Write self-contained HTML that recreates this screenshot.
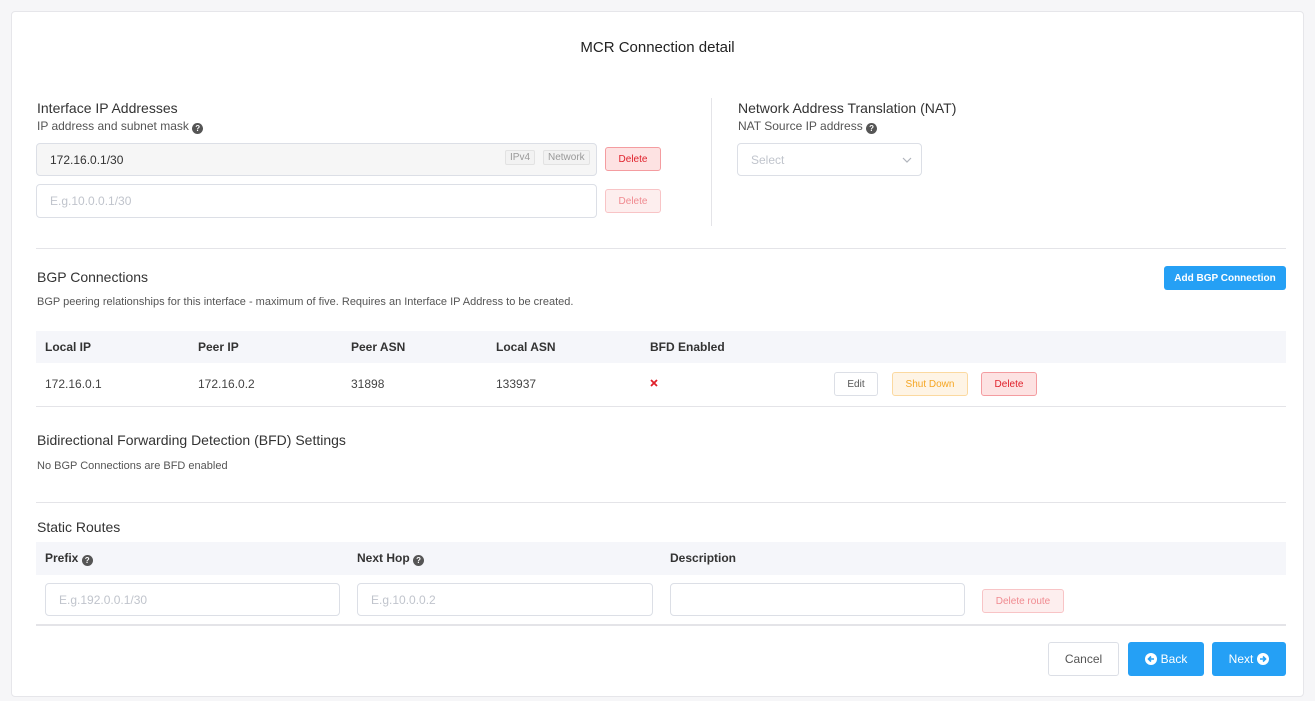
<!DOCTYPE html>
<html><head><style>
*{box-sizing:border-box;margin:0;padding:0}
body{width:1315px;height:701px;background:#f6f6f8;font-family:"Liberation Sans",sans-serif;color:#333;position:relative;overflow:hidden}
.card{position:absolute;left:11px;top:11px;width:1293px;height:686px;background:#fff;border:1px solid #e6e6ea;border-radius:4px}
.a{position:absolute}
.h{font-size:14px;color:#333}
.s{font-size:12px;color:#555}
.inp{position:absolute;border:1px solid #dcdfe6;border-radius:4px;background:#fff;font-size:12px;color:#c0c4cc;padding-left:13px;display:flex;align-items:center}
.btn{position:absolute;border-radius:3px;font-size:10px;display:flex;align-items:center;justify-content:center}
.del{background:#fde2e2;border:1px solid #f49ca0;color:#e0212b}
.deld{background:#fdeeee;border:1px solid #f8c4c6;color:#f08a90}
.tag{position:absolute;font-size:10px;color:#999;border:1px solid #e2e2e2;background:#f2f2f2;border-radius:2px;padding:1px 4px}
.line{position:absolute;left:36px;width:1250px;height:1px;background:#e4e4e8}
.th{position:absolute;left:36px;width:1250px;background:#f5f6fa}
.tt{position:absolute;font-size:12px;font-weight:bold;color:#333}
.td{position:absolute;font-size:12px;color:#444}
.q{display:inline-block;width:11px;height:11px;border-radius:50%;background:#555;color:#fff;font-size:8px;text-align:center;line-height:11px;font-weight:bold;vertical-align:-1px}
.blue{background:#25a0f5;color:#fff;border-radius:3px}
</style></head><body>
<div class="card"></div>
<div class="a" style="left:0;width:1315px;top:39px;text-align:center;font-size:15px;color:#222">MCR Connection detail</div>

<div class="a h" style="left:37px;top:100px">Interface IP Addresses</div>
<div class="a s" style="left:37px;top:119px">IP address and subnet mask <span class="q">?</span></div>
<div class="inp" style="left:36px;top:143px;width:561px;height:33px;background:#f6f6f6;color:#333">172.16.0.1/30</div>
<div class="tag" style="left:505px;top:150px">IPv4</div>
<div class="tag" style="left:543px;top:150px">Network</div>
<div class="btn del" style="left:605px;top:147px;width:56px;height:24px">Delete</div>
<div class="inp" style="left:36px;top:184px;width:561px;height:34px">E.g.10.0.0.1/30</div>
<div class="btn deld" style="left:605px;top:189px;width:56px;height:24px">Delete</div>

<div class="a" style="left:711px;top:98px;width:1px;height:128px;background:#e4e4e8"></div>
<div class="a h" style="left:738px;top:100px">Network Address Translation (NAT)</div>
<div class="a s" style="left:738px;top:119px">NAT Source IP address <span class="q">?</span></div>
<div class="inp" style="left:737px;top:143px;width:185px;height:33px">Select<svg style="position:absolute;right:9px;top:13px" width="10" height="6" viewBox="0 0 10 6"><path d="M1 1l4 4 4-4" fill="none" stroke="#b0b4bc" stroke-width="1.2"/></svg></div>

<div class="line" style="top:248px"></div>
<div class="a h" style="left:37px;top:269px">BGP Connections</div>
<div class="a" style="left:37px;top:296px;font-size:11px;color:#555">BGP peering relationships for this interface - maximum of five. Requires an Interface IP Address to be created.</div>
<div class="btn blue" style="left:1164px;top:266px;width:122px;height:24px;font-weight:bold">Add BGP Connection</div>

<div class="th" style="top:331px;height:32px"></div>
<div class="tt" style="left:45px;top:340px">Local IP</div>
<div class="tt" style="left:198px;top:340px">Peer IP</div>
<div class="tt" style="left:351px;top:340px">Peer ASN</div>
<div class="tt" style="left:496px;top:340px">Local ASN</div>
<div class="tt" style="left:650px;top:340px">BFD Enabled</div>
<div class="td" style="left:45px;top:377px">172.16.0.1</div>
<div class="td" style="left:198px;top:377px">172.16.0.2</div>
<div class="td" style="left:351px;top:377px">31898</div>
<div class="td" style="left:496px;top:377px">133937</div>
<svg class="a" style="left:650px;top:379px" width="8" height="8" viewBox="0 0 8 8"><path d="M1 1l6 6M7 1l-6 6" stroke="#e0212b" stroke-width="1.8"/></svg>
<div class="btn" style="left:834px;top:372px;width:44px;height:24px;border:1px solid #dcdfe6;color:#555">Edit</div>
<div class="btn" style="left:892px;top:372px;width:76px;height:24px;border:1px solid #fbd9a0;background:#fef4e5;color:#f5a623">Shut Down</div>
<div class="btn del" style="left:981px;top:372px;width:56px;height:24px">Delete</div>
<div class="line" style="top:406px"></div>

<div class="a h" style="left:37px;top:432px">Bidirectional Forwarding Detection (BFD) Settings</div>
<div class="a" style="left:37px;top:460px;font-size:11px;color:#555">No BGP Connections are BFD enabled</div>
<div class="line" style="top:502px"></div>

<div class="a h" style="left:37px;top:519px">Static Routes</div>
<div class="th" style="top:542px;height:33px"></div>
<div class="tt" style="left:45px;top:551px">Prefix <span class="q">?</span></div>
<div class="tt" style="left:357px;top:551px">Next Hop <span class="q">?</span></div>
<div class="tt" style="left:670px;top:551px">Description</div>
<div class="inp" style="left:45px;top:583px;width:295px;height:33px">E.g.192.0.0.1/30</div>
<div class="inp" style="left:357px;top:583px;width:296px;height:33px">E.g.10.0.0.2</div>
<div class="inp" style="left:670px;top:583px;width:295px;height:33px"></div>
<div class="btn deld" style="left:982px;top:589px;width:82px;height:24px">Delete route</div>
<div class="a" style="left:36px;top:624px;width:1250px;height:2px;background:#e4e4e8"></div>

<div class="btn" style="left:1048px;top:642px;width:71px;height:34px;border:1px solid #dcdfe6;font-size:12px;color:#555">Cancel</div>
<div class="btn blue" style="left:1128px;top:642px;width:76px;height:34px;font-size:12px"><svg width="12" height="12" viewBox="0 0 12 12" style="margin-right:4px"><circle cx="6" cy="6" r="6" fill="#fff"/><path d="M9 6H4M6 3.5L3.5 6 6 8.5" fill="none" stroke="#25a0f5" stroke-width="1.6"/></svg>Back</div>
<div class="btn blue" style="left:1212px;top:642px;width:74px;height:34px;font-size:12px">Next<svg width="12" height="12" viewBox="0 0 12 12" style="margin-left:4px"><circle cx="6" cy="6" r="6" fill="#fff"/><path d="M3 6h5M6 3.5L8.5 6 6 8.5" fill="none" stroke="#25a0f5" stroke-width="1.6"/></svg></div>
</body></html>
